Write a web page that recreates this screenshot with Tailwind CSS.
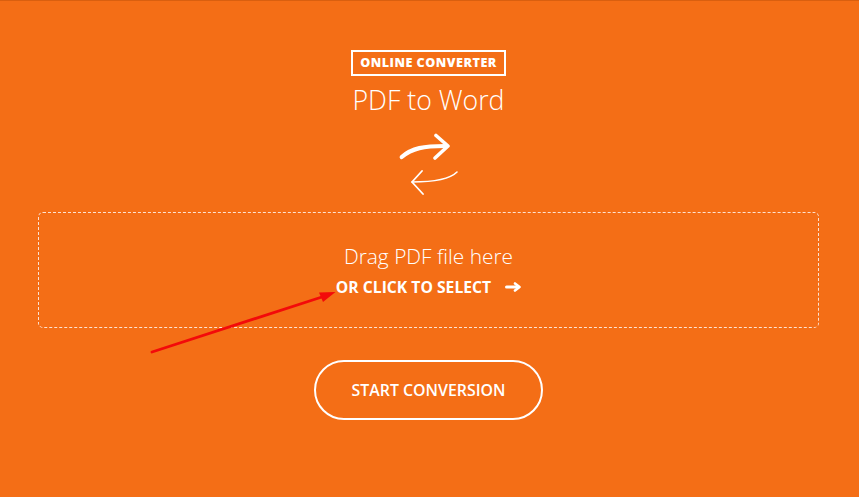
<!DOCTYPE html>
<html>
<head>
<meta charset="utf-8">
<script src="https://cdn.jsdelivr.net/npm/@tailwindcss/browser@4"></script>
</head>
<body class="bg-[#f46e16]">
<main class="relative h-[497px] w-[859px] overflow-hidden border-t border-[#d95f0f] font-['Open_Sans',sans-serif] text-white">
  <div class="flex flex-col items-center pt-[49px]">
    <div class="ml-[-2px] flex h-[26px] w-[155px] items-center justify-center border-2 border-white text-[12.6px] font-extrabold tracking-[0.5px]">ONLINE CONVERTER</div>
    <h1 class="ml-[-2px] mt-[5px] text-[26.7px] leading-[37px] font-light">PDF to Word</h1>
    <svg class="ml-[-2px] mt-[15px]" width="62" height="62" viewBox="0 0 62 62" fill="none" stroke="white" stroke-linecap="round" stroke-linejoin="round" aria-hidden="true">
      <path d="M3.700 24C14 15 26 13 47 13" stroke-width="4.200"/>
      <path d="M38 2.500L50 13L37 25" stroke-width="3.600"/>
      <path d="M59 39C52 46 38 49 14 49" stroke-width="1.600"/>
      <path d="M24 38L14 49L25 61" stroke-width="1.800"/>
    </svg>
    <div class="ml-[-2px] mt-[17px] flex h-[116px] w-[781px] flex-col items-center rounded-[5px] border border-dashed border-white/80 pt-[27px]">
      <p class="text-[20.9px] leading-[32px] font-light">Drag PDF file here</p>
      <p class="mt-[3px] flex items-center text-[15.7px] leading-[24px] font-bold"><span>OR CLICK TO SELECT</span><svg class="ml-[14px]" width="16" height="10" viewBox="0 0 16 10" fill="none" stroke="white" stroke-linecap="round" stroke-linejoin="round" aria-hidden="true"><path d="M1.500 5H13" stroke-width="3"/><path d="M10 1.500L14.500 5L10 8.500" stroke-width="2.600"/></svg></p>
    </div>
    <button class="ml-[-2px] mt-[32px] h-[60px] w-[229px] rounded-full border-2 border-white pt-[1px] text-[15.9px] font-semibold">START CONVERSION</button>
  </div>
  <svg class="absolute left-[148px] top-[286px]" width="190" height="70" viewBox="0 0 190 70" fill="none" aria-hidden="true">
    <path d="M4 65L177 9" stroke="#f30a0a" stroke-width="2.800" stroke-linecap="round"/>
    <path d="M187.500 5L171 5.500L175 15Z" fill="#f30a0a"/>
  </svg>
</main>
</body>
</html>
